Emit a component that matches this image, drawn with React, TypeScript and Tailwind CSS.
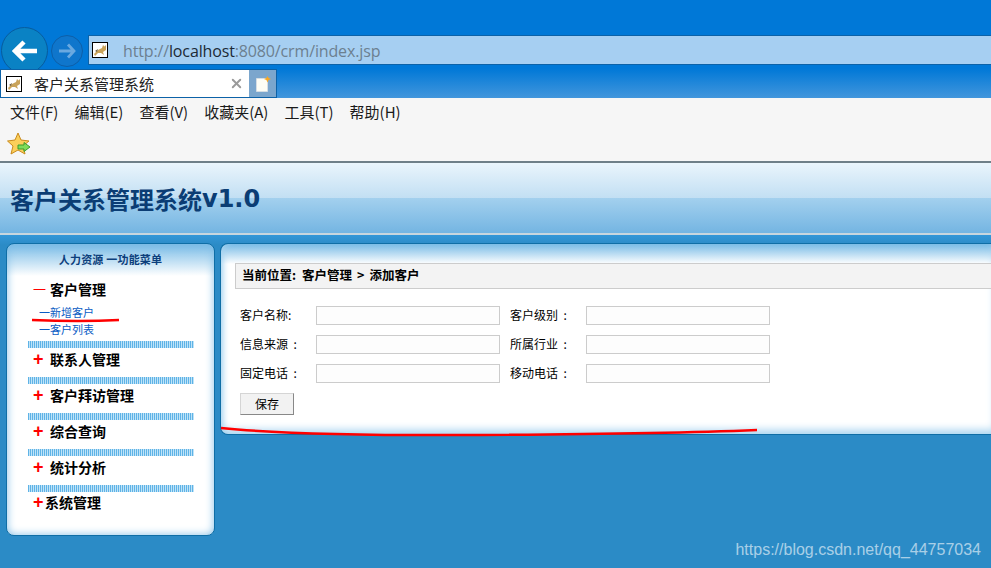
import { X } from 'lucide-react';

const cjk = 'font-["Noto_Sans_CJK_SC","Liberation_Sans",sans-serif]';

const menus = ['文件(F)', '编辑(E)', '查看(V)', '收藏夹(A)', '工具(T)', '帮助(H)'];
const closedMenus = ['联系人管理', '客户拜访管理', '综合查询', '统计分析'];

const fields = [
  ['客户名称:', '客户级别  :'],
  ['信息来源  :', '所属行业  :'],
  ['固定电话  :', '移动电话  :'],
];

function TomcatIcon() {
  return (
    <svg width="16" height="16" viewBox="0 0 16 16" className="shrink-0">
      <rect x="0.5" y="0.5" width="15" height="15" fill="#fff" stroke="#000" />
      <path d="M2 12 L6 8 L10 6 L11 3 L12.5 4.5 L14 3 L14 8 L11 10 L12 13 L9 11 L6 11 L3 14 Z" fill="#c9a35a" />
      <path d="M3 9 L6 7 L5 10 Z" fill="#6b5a3a" />
    </svg>
  );
}

function BackArrow() {
  return (
    <svg width="26" height="24" viewBox="0 0 26 24">
      <path d="M12 3 L3 12 L12 21 M3 12 H25" fill="none" stroke="#fff" strokeWidth="4.5" />
    </svg>
  );
}

function ForwardArrow() {
  return (
    <svg width="18" height="16" viewBox="0 0 18 16">
      <path d="M10 1.5 L16 8 L10 14.5 M16 8 H1" fill="none" stroke="#6aa9e0" strokeWidth="2.8" />
    </svg>
  );
}

function NewTabIcon() {
  return (
    <svg width="16" height="16" viewBox="0 0 16 16">
      <path d="M1.5 2.5 H12.5 V15.5 H1.5 Z" fill="#fdfdf5" stroke="#d5dde3" />
      <path d="M12.5 0 L13.6 2 L16 3 L13.6 4 L12.5 6.5 L11.4 4 L9 3 L11.4 2 Z" fill="#f7a823" />
    </svg>
  );
}

function FavStar() {
  return (
    <svg width="24" height="24" viewBox="0 0 24 24">
      <path d="M11 1 L14 8 L22 9 L16 14 L18 22 L11 18 L4 22 L6 14 L0.5 9 L8 8 Z" fill="#fbcf5a" stroke="#c98a1c" />
      <path d="M11 13 H17 V10.5 L23 15 L17 19.5 V17 H11 Z" fill="#7fdc5a" stroke="#3c9a2c" />
    </svg>
  );
}

function Divider() {
  return <div className="h-[7px] ml-[21px] w-[166px] bg-[repeating-linear-gradient(90deg,#5fb3e6_0,#5fb3e6_1px,#bfe3f8_1px,#bfe3f8_2px)]" />;
}

function MenuRow({ label }: { label: string }) {
  return (
    <div className="h-[29px] pb-[7px] flex items-center text-sm font-bold text-black pl-[26px]">
      <span className="w-[17px] font-['Liberation_Sans',sans-serif] text-lg text-[#ff0000] leading-none">+</span>
      <span>{label}</span>
    </div>
  );
}

function Sidebar() {
  return (
    <div className="w-[209px] h-[293px] shrink-0 rounded-lg border border-[#0f6ea6] bg-[linear-gradient(#78bbe6,#ffffff_32px)] shadow-[inset_0_0_8px_#7fbde6]">
      <div className="pt-[8px] h-[32px] text-center text-[11px] font-bold leading-[15px] tracking-[0.2px] text-[#0c3f7c]">人力资源 一功能菜单</div>
      <div className="h-[29px] pb-[4px] flex items-center text-sm font-bold text-black pl-[26px]">
        <span className="w-[17px] text-[13px] text-[#ff0000] font-normal leading-none">一</span>
        <span>客户管理</span>
      </div>
      <div className="pl-[32px] text-[11px] leading-[17px] text-[#0a5cc4] h-[37px]">
        <div className="-mt-[1px]">一新增客户</div>
        <div>一客户列表</div>
      </div>
      {closedMenus.map((label) => (
        <div key={label}>
          <Divider />
          <MenuRow label={label} />
        </div>
      ))}
      <Divider />
      <div className="h-[27px] pb-[7px] flex items-center text-sm font-bold text-black pl-[26px]">
        <span className="w-[12px] font-['Liberation_Sans',sans-serif] text-lg text-[#ff0000] leading-none">+</span>
        <span>系统管理</span>
      </div>
    </div>
  );
}

function MainPanel() {
  return (
    <div className="flex-1 h-[192px] rounded-l-lg border border-r-0 border-[#0f6ea6] bg-[linear-gradient(#78bbe6,#ffffff_20px)] shadow-[inset_0_-8px_8px_-4px_#a8d4f0,inset_6px_0_6px_-4px_#a8d4f0] pt-[19px] pl-[14px]">
      <div className="h-[26px] border border-r-0 border-[#cccccc] bg-[#f3f3f3] pl-[6px] pb-[2px] flex items-center text-[12.5px] font-bold text-black">
        <span>当前位置:</span>
        <span className="ml-[6px]">客户管理</span>
        <span className="mx-[5px]">&gt;</span>
        <span>添加客户</span>
      </div>
      <div className="pt-[17px] pl-[5px] flex flex-col gap-[10px]">
        {fields.map(([left, right]) => (
          <div key={left} className="h-[19px] flex items-center text-xs text-black">
            <span className="w-[76px] pb-[2px] whitespace-pre">{left}</span>
            <input className="w-[184px] h-[19px] border border-[#cccccc] bg-[#fdfdfd]" />
            <span className="w-[76px] pl-[10px] pb-[2px] box-content whitespace-pre">{right}</span>
            <input className="w-[184px] h-[19px] border border-[#cccccc] bg-[#fdfdfd]" />
          </div>
        ))}
      </div>
      <button className="mt-[10px] ml-[5px] w-[54px] h-[22px] border border-[#d5d5d5] border-r-[#888] border-b-[#888] bg-[#f2f2f2] text-xs text-black">
        保存
      </button>
    </div>
  );
}

export default function App() {
  return (
    <div className={`relative w-full h-[568px] overflow-hidden bg-[#2b8bc6] ${cjk}`}>
      {/* browser chrome */}
      <div className="h-[98px] bg-[linear-gradient(#0078d7_70%,#4296dc)]">
        <div className="h-[69px] pt-[27px] pl-[1px] flex items-start">
          <div className="w-[47px] h-[47px] shrink-0 rounded-full border border-[#075c9e] bg-[#0a82c4] flex items-center justify-center">
            <BackArrow />
          </div>
          <div className="w-[32px] h-[32px] shrink-0 ml-[3px] mt-[8px] rounded-full border border-[#0d5fa8] bg-[#0f76cc] flex items-center justify-center">
            <ForwardArrow />
          </div>
          <div className="flex-1 h-[30px] ml-[5px] mt-[8px] border border-[#0c62a8] border-r-0 bg-[#a6cff2] flex items-center pl-[3px]">
            <TomcatIcon />
            <span className="ml-[15px] pt-[1px] text-base font-['Open_Sans',sans-serif] text-[#6c8090] tracking-[-0.14px]">
              http://<span className="text-[#1c2a36]">localhost</span>:8080/crm/index.jsp
            </span>
          </div>
        </div>
        <div className="relative h-[29px] flex">
          <div className="w-[249px] h-[29px] border-y border-l border-[#0c62a8] bg-white flex items-center pl-[5px] pr-[5px]">
            <TomcatIcon />
            <span className="ml-[12px] pt-[1px] text-[15px] text-[#222]">客户关系管理系统</span>
            <X className="ml-auto text-[#9a9a9a]" size={15} strokeWidth={3} />
          </div>
          <div className="w-[28px] h-[29px] border border-l-0 border-[#0c62a8] bg-[#7ba6cd] flex items-center justify-center">
            <NewTabIcon />
          </div>
        </div>
      </div>

      <div className="h-[65px] bg-[#f6f6f6] border-b-2 border-[#6f7f88]">
        <div className="h-[29px] pl-[10px] flex items-center gap-[16px] text-[15px] text-[#1a1a1a]">
          {menus.map((m) => (
            <span key={m}>{m}</span>
          ))}
        </div>
        <div className="pl-[7px] pt-[5px]">
          <FavStar />
        </div>
      </div>

      {/* app header */}
      <div className="h-[72px] pl-[10px] pt-[2px] flex items-center border-b-2 border-[#c8d6de] bg-[linear-gradient(#eaf5fc,#c2dff3_50%,#a3d0ee_50%,#74b5e2)] text-2xl font-bold text-[#0b3d74]">
        客户关系管理系统<span className="font-['DejaVu_Sans',sans-serif]">v1.0</span>
      </div>

      <div className="pt-[8px] pl-[6px] flex gap-[5px] bg-[linear-gradient(#3497d8,#2b8bc6_10px)]">
        <Sidebar />
        <MainPanel />
      </div>

      {/* red pen marks on the screenshot */}
      <svg className="absolute left-0 top-0 pointer-events-none" width="991" height="568">
        <path d="M32 320 Q80 322 119 320" fill="none" stroke="#ff0000" strokeWidth="2.5" />
        <path d="M221 428 Q300 436 480 435 T757 430" fill="none" stroke="#ff0000" strokeWidth="2.5" />
      </svg>
      <div className="absolute right-[10px] bottom-[6px] font-['Liberation_Sans',sans-serif] text-base text-white/60">
        https://blog.csdn.net/qq_44757034
      </div>
    </div>
  );
}
